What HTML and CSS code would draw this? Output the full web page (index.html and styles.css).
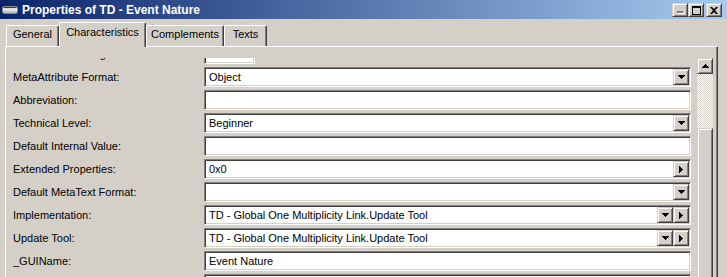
FILE: index.html
```html
<!doctype html>
<html>
  <head>
    <meta charset="utf-8">
    <link rel="stylesheet" href="styles.css">
    <title>Properties of TD - Event Nature</title>
  </head>
  <body>
    <div class="window">
      <div class="titlebar">
        <svg class="appicon" width="16" height="10" viewBox="0 0 16 10">
          <defs>
            <linearGradient id="ig" x1="0" y1="0" x2="0" y2="1">
              <stop offset="0" stop-color="#6b6b6b"/>
              <stop offset="0.35" stop-color="#f4f4f4"/>
              <stop offset="1" stop-color="#a9a9a9"/>
            </linearGradient>
          </defs>
          <rect x="0.5" y="1.5" width="15" height="7" rx="2" fill="url(#ig)" stroke="#8a8a8a"/>
          <rect x="2" y="2" width="12" height="1" fill="#3c3c3c"/>
        </svg>
        <span class="caption">Properties of TD - Event Nature</span>
        <div class="capbtns">
          <span class="raised capbtn">
            <svg width="8" height="8" viewBox="0 0 8 8"><rect x="1" y="5" width="6" height="2" fill="#808080"/><rect x="2" y="7" width="6" height="1" fill="#fff"/></svg>
          </span>
          <span class="raised capbtn">
            <svg width="9" height="9" viewBox="0 0 9 9"><path d="M0 0h9v9h-9z M1 2v6h7v-6z" fill="#000" fill-rule="evenodd"/></svg>
          </span>
          <span class="raised capbtn close">
            <svg width="8" height="7" viewBox="0 0 8 7"><path d="M0 0h2l2 2 2-2h2l-3 3.5 3 3.5h-2l-2-2-2 2h-2l3-3.5z" fill="#000"/></svg>
          </span>
        </div>
      </div>

      <div class="tabs">
        <div class="tab tab-general">General</div>
        <div class="tab tab-chars selected">Characteristics</div>
        <div class="tab tab-compl">Complements</div>
        <div class="tab tab-texts">Texts</div>
      </div>

      <div class="panel">
        <div class="scroller">
          <div class="rows">
            <div class="label">MetaAttribute Length:</div>
            <div class="field short"></div>

            <div class="label">MetaAttribute Format:</div>
            <div class="field">
              <span class="value">Object</span>
              <span class="raised sbtn"><svg width="7" height="4" viewBox="0 0 7 4"><path d="M0 0h7v1h-1v1h-1v1h-1v1h-1v-1h-1v-1h-1v-1h-1z"/></svg></span>
            </div>

            <div class="label">Abbreviation:</div>
            <div class="field"><span class="value"></span></div>

            <div class="label">Technical Level:</div>
            <div class="field">
              <span class="value">Beginner</span>
              <span class="raised sbtn"><svg width="7" height="4" viewBox="0 0 7 4"><path d="M0 0h7v1h-1v1h-1v1h-1v1h-1v-1h-1v-1h-1v-1h-1z"/></svg></span>
            </div>

            <div class="label">Default Internal Value:</div>
            <div class="field"><span class="value"></span></div>

            <div class="label">Extended Properties:</div>
            <div class="field">
              <span class="value">0x0</span>
              <span class="raised sbtn"><svg width="4" height="7" viewBox="0 0 4 7"><path d="M0 0h1v1h1v1h1v1h1v1h-1v1h-1v1h-1v1h-1z"/></svg></span>
            </div>

            <div class="label">Default MetaText Format:</div>
            <div class="field">
              <span class="value"></span>
              <span class="raised sbtn"><svg width="7" height="4" viewBox="0 0 7 4"><path d="M0 0h7v1h-1v1h-1v1h-1v1h-1v-1h-1v-1h-1v-1h-1z"/></svg></span>
            </div>

            <div class="label">Implementation:</div>
            <div class="field">
              <span class="value">TD - Global One Multiplicity Link.Update Tool</span>
              <span class="raised sbtn"><svg width="7" height="4" viewBox="0 0 7 4"><path d="M0 0h7v1h-1v1h-1v1h-1v1h-1v-1h-1v-1h-1v-1h-1z"/></svg></span>
              <span class="raised sbtn"><svg width="4" height="7" viewBox="0 0 4 7"><path d="M0 0h1v1h1v1h1v1h1v1h-1v1h-1v1h-1v1h-1z"/></svg></span>
            </div>

            <div class="label">Update Tool:</div>
            <div class="field">
              <span class="value">TD - Global One Multiplicity Link.Update Tool</span>
              <span class="raised sbtn"><svg width="7" height="4" viewBox="0 0 7 4"><path d="M0 0h7v1h-1v1h-1v1h-1v1h-1v-1h-1v-1h-1v-1h-1z"/></svg></span>
              <span class="raised sbtn"><svg width="4" height="7" viewBox="0 0 4 7"><path d="M0 0h1v1h1v1h1v1h1v1h-1v1h-1v1h-1v1h-1z"/></svg></span>
            </div>

            <div class="label">_GUIName:</div>
            <div class="field"><span class="value">Event Nature</span></div>

            <div class="label"></div>
            <div class="field"><span class="value"></span></div>
          </div>

          <div class="vscroll">
            <span class="raised sbtn"><svg width="7" height="4" viewBox="0 0 7 4"><path d="M3 0h1v1h1v1h1v1h1v1h-7v-1h1v-1h1v-1h1z"/></svg></span>
            <div class="track"></div>
            <div class="raised thumb"></div>
          </div>
        </div>
      </div>
    </div>
  </body>
</html>
```

FILE: styles.css
```css
body {
  margin: 0;
  background: #d4d0c8;
  font-family: "Liberation Sans", Arial, sans-serif;
  font-size: 11px;
  color: #000;
}
.window {
  width: 727px;
  height: 277px;
  overflow: hidden;
  background: #d4d0c8;
}

/* title bar */
.titlebar {
  height: 19px;
  display: flex;
  align-items: center;
  padding: 0 5px 0 2px;
  background: linear-gradient(to right, #0a246a, #a6caf0);
}
.appicon {
  margin: 1px 4px 0 0;
  flex-shrink: 0;
}
.caption {
  flex: 1;
  color: #fff;
  font-weight: bold;
  font-size: 12px;
  white-space: nowrap;
}
.capbtns {
  display: flex;
  align-self: flex-start;
  margin-top: 3px;
}
.capbtn {
  width: 16px;
  height: 14px;
}
.capbtn.close {
  margin-left: 2px;
}

/* 3d raised face used by every button */
.raised {
  box-sizing: border-box;
  display: flex;
  align-items: center;
  justify-content: center;
  background: #d4d0c8;
  border: 1px solid;
  border-color: #d4d0c8 #404040 #404040 #d4d0c8;
  box-shadow: inset 1px 1px #fff, inset -1px -1px #808080;
}

/* tabs */
.tabs {
  display: flex;
  align-items: flex-end;
  height: 28px;
  margin-bottom: -1px;
  padding-left: 6px;
  position: relative;
  z-index: 1;
}
.tab {
  box-sizing: border-box;
  height: 21px;
  margin-bottom: 1px;
  padding-top: 2px;
  line-height: 13px;
  text-align: center;
  border-left: 1px solid #fff;
  border-top: 1px solid #fff;
  border-right: 1px solid #404040;
  border-radius: 2px 2px 0 0;
  box-shadow: inset -1px 0 #808080;
  white-space: nowrap;
}
.tab.selected {
  height: 25px;
  margin-bottom: 0;
  padding-top: 3px;
  background: #d4d0c8;
}
.tab-general { width: 53px; }
.tab-chars { width: 87px; }
.tab-compl { width: 78px; }
.tab-texts { width: 43px; }

/* tab page */
.panel {
  box-sizing: border-box;
  width: 713px;
  height: 240px;
  margin-left: 5px;
  padding: 11px 4px 0 7px;
  border-left: 1px solid #fff;
  border-top: 1px solid #fff;
  border-right: 1px solid #404040;
  box-shadow: inset -1px 0 #808080;
}
.scroller {
  display: flex;
  align-items: flex-start;
  height: 230px;
  overflow: hidden;
}
.rows {
  display: grid;
  grid-template-columns: 191px 487px;
  grid-auto-rows: 20px;
  row-gap: 3px;
  align-items: center;
  margin-top: -14px;
}
.label {
  white-space: nowrap;
}
.field {
  box-sizing: border-box;
  height: 20px;
  padding: 1px;
  display: flex;
  align-items: center;
  background: #fff;
  border: 1px solid;
  border-color: #808080 #fff #fff #808080;
  box-shadow: inset 1px 1px #404040, inset -1px -1px #d4d0c8;
}
.field.short {
  width: 51px;
}
.value {
  flex: 1;
  padding-left: 3px;
  white-space: nowrap;
}
.sbtn {
  width: 16px;
  height: 16px;
  flex-shrink: 0;
}

/* vertical scroll bar */
.vscroll {
  width: 16px;
  margin-left: 6px;
  display: flex;
  flex-direction: column;
  flex-shrink: 0;
}
.track {
  height: 54px;
  background: repeating-conic-gradient(#d4d0c8 0 25%, #fff 0 50%) 0 0 / 2px 2px;
}
.thumb {
  height: 200px;
}
```
